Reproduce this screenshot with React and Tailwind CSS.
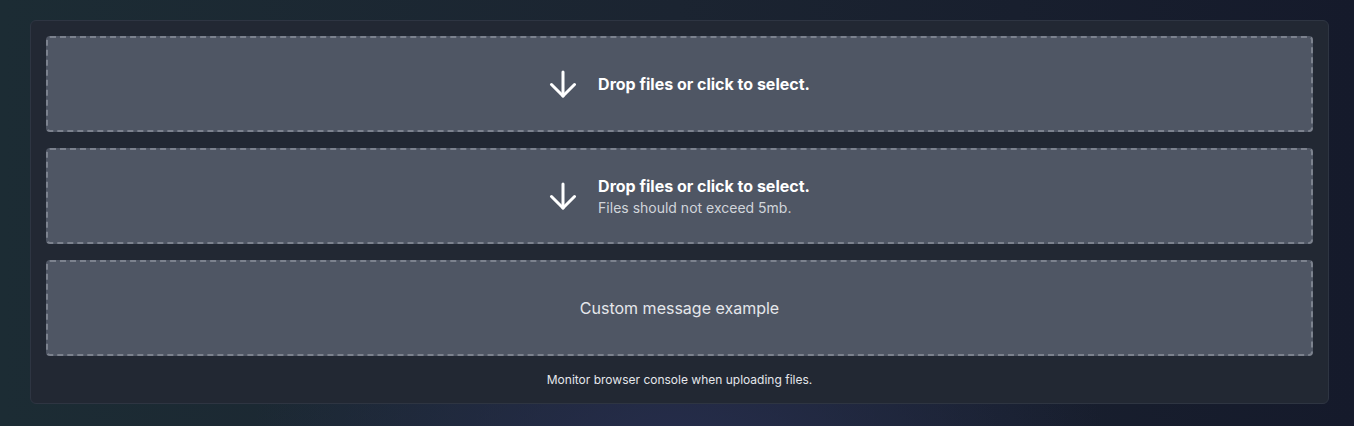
import React from "react";

// arrow icon drawn to match the reference glyph
const ArrowDownIcon = () => (
  <svg width="28" height="28" viewBox="0 0 28 28" fill="none" stroke="white" strokeWidth="3" strokeLinecap="round" strokeLinejoin="round" className="shrink-0">
    <path d="M14 2V26" />
    <path d="M2.5 14.5l11.5 11.5 11.5-11.5" />
  </svg>
);

const DropZone = ({ children }) => (
  <div className="h-[96px] flex items-center justify-center rounded-[4px] border-2 border-dashed border-[#7c828e] bg-[#4f5664] cursor-pointer">
    {children}
  </div>
);

export default function App() {
  return (
    <div
      className="min-h-[426px] w-full pt-[20px] pl-[30px] pr-[25px] bg-[radial-gradient(ellipse_at_50%_110%,#262d4c_0%,transparent_45%),linear-gradient(90deg,#1c2c34_0%,#1b2431_50%,#151a2b_100%)]"
      style={{ fontFamily: "Inter, 'Noto Sans', sans-serif" }}
    >
      <div className="rounded-md border border-[#2e3542] bg-[#222833] px-[15px] pt-[15px] pb-[15px]">
        <div className="flex flex-col gap-4">
          {/* simple */}
          <DropZone>
            <div className="flex items-center gap-[21px]">
              <ArrowDownIcon />
              <span className="text-base font-bold text-white leading-6">Drop files or click to select.</span>
            </div>
          </DropZone>

          {/* with hint */}
          <DropZone>
            <div className="flex items-center gap-[21px]">
              <ArrowDownIcon />
              <div className="flex flex-col">
                <span className="text-base font-bold text-white leading-6">Drop files or click to select.</span>
                <span className="text-sm text-[#d1d5db] leading-5">Files should not exceed 5mb.</span>
              </div>
            </div>
          </DropZone>

          {/* custom */}
          <DropZone>
            <span className="text-base text-[#e5e7eb]">Custom message example</span>
          </DropZone>
        </div>
        <p className="mt-4 text-center text-xs leading-4 text-[#e5e7eb]">Monitor browser console when uploading files.</p>
      </div>
    </div>
  );
}
